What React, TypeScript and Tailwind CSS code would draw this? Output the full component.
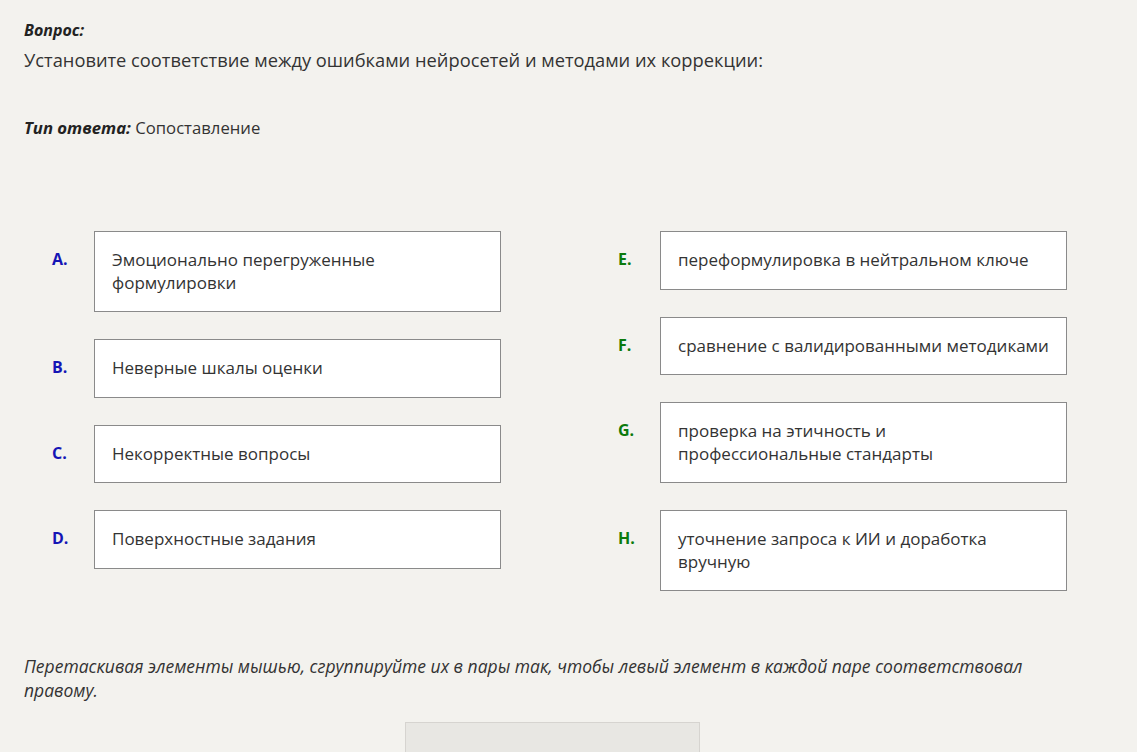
const LEFT = [
  { key: 'A.', lines: ['Эмоционально перегруженные', 'формулировки'] },
  { key: 'B.', lines: ['Неверные шкалы оценки'] },
  { key: 'C.', lines: ['Некорректные вопросы'] },
  { key: 'D.', lines: ['Поверхностные задания'] },
];

const RIGHT = [
  { key: 'E.', lines: ['переформулировка в нейтральном ключе'] },
  { key: 'F.', lines: ['сравнение с валидированными методиками'] },
  { key: 'G.', lines: ['проверка на этичность и', 'профессиональные стандарты'] },
  { key: 'H.', lines: ['уточнение запроса к ИИ и доработка', 'вручную'] },
];

function Column({ items, labelClass }: { items: { key: string; lines: string[] }[]; labelClass: string }) {
  return (
    <div className="flex flex-col gap-[27px]">
      {items.map((it) => (
        <div key={it.key} className="flex items-start">
          <div className={`w-[42px] pt-[17px] text-[16px] leading-[22px] font-bold ${labelClass}`}>{it.key}</div>
          <div className="w-[407px] bg-white border border-[#8a8a8a] px-[17px] py-[17px] text-[17px] leading-[22.5px] text-[#333]">
            {it.lines.map((l) => (
              <div key={l} className="whitespace-nowrap">{l}</div>
            ))}
          </div>
        </div>
      ))}
    </div>
  );
}

export default function App() {
  return (
    <div className="min-h-[752px] bg-[#f3f2ee] px-[24px] pt-[19px] text-[#333] font-['Open_Sans',sans-serif]">
      {/* Question header */}
      <div className="text-[16px] leading-[22px] font-bold italic text-[#222]">Вопрос:</div>
      <div className="mt-[6px] text-[18.3px] leading-[26px]">
        Установите соответствие между ошибками нейросетей и методами их коррекции:
      </div>

      <div className="mt-[43px] text-[16.7px] leading-[24px]">
        <span className="font-bold italic text-[#222]">Тип ответа:</span> Сопоставление
      </div>

      {/* Matching columns */}
      <div className="mt-[91px] ml-[28px] flex gap-[117px] items-start">
        <Column items={LEFT} labelClass="text-[#1515b5]" />
        <Column items={RIGHT} labelClass="text-[#0c7a0c]" />
      </div>

      <div className="mt-[63px] text-[17.5px] leading-[24px] italic text-[#333]">
        Перетаскивая элементы мышью, сгруппируйте их в пары так, чтобы левый элемент в каждой паре соответствовал
        <br />
        правому.
      </div>

      <div className="mt-[20px] ml-[381px] w-[295px] h-[40px] bg-[#e8e7e3] border border-[#d6d4d0]" />
    </div>
  );
}
